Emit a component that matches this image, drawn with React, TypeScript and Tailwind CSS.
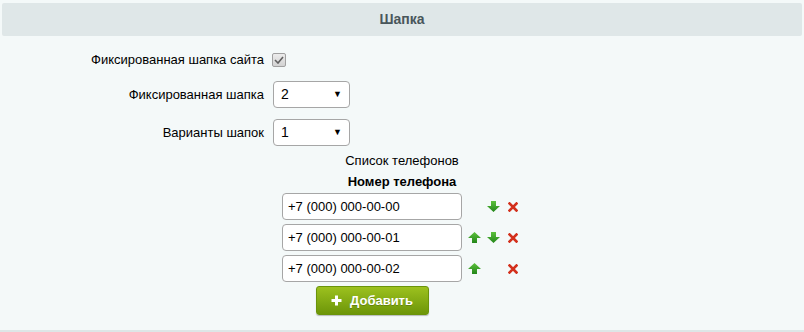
const font = "font-['Arial','Liberation_Sans',sans-serif]";

const ArrowUp = () => (
  <svg width="13" height="11" viewBox="0 0 13 11">
    <defs>
      <linearGradient id="gu" x1="0" y1="0" x2="0" y2="1">
        <stop offset="0" stopColor="#5cc13c" />
        <stop offset="1" stopColor="#23861a" />
      </linearGradient>
    </defs>
    <polygon points="6.5,0 13,6 9,6 9,11 4,11 4,6 0,6" fill="url(#gu)" />
  </svg>
);

const ArrowDown = () => (
  <svg width="13" height="11" viewBox="0 0 13 11">
    <defs>
      <linearGradient id="gd" x1="0" y1="0" x2="0" y2="1">
        <stop offset="0" stopColor="#5cc13c" />
        <stop offset="1" stopColor="#23861a" />
      </linearGradient>
    </defs>
    <polygon points="4,0 9,0 9,5 13,5 6.5,11 0,5 4,5" fill="url(#gd)" />
  </svg>
);

const Cross = () => (
  <svg width="10" height="10" viewBox="0 0 10 10">
    <path d="M1.5 1.5 L8.5 8.5 M8.5 1.5 L1.5 8.5" stroke="#d3301c" strokeWidth="2.6" strokeLinecap="square" />
  </svg>
);

const Select = ({ value }: { value: string }) => (
  <div className="flex h-[27px] w-[77px] items-center justify-between rounded-[4px] border border-[#a6a6a6] bg-white pl-[7px] pr-[7px] text-[14px] text-black">
    <span>{value}</span>
    <span className="text-[9px]">▼</span>
  </div>
);

const phones = [
  { num: '+7 (000) 000-00-00', up: false, down: true },
  { num: '+7 (000) 000-00-01', up: true, down: true },
  { num: '+7 (000) 000-00-02', up: true, down: false },
];

export default function App() {
  return (
    <div className={`${font} h-[332px] w-[804px] border-b-2 border-[#dde6e7] bg-[#f4f9f9] text-[13px] text-black`}>
      <div className="px-[2px] pt-[3px]">
        <div className="flex h-[33px] items-center justify-center rounded-[2px] bg-[#dfe7e8] text-[14px] font-bold text-[#49565b]">
          Шапка
        </div>
      </div>

      <div className="mt-[14px] flex flex-col gap-[11px]">
        <div className="flex h-[20px] items-center">
          <div className="w-[268px] pr-[4px] text-right">Фиксированная шапка сайта</div>
          <div className="ml-[4px] flex h-[14px] w-[14px] items-center justify-center rounded-[2px] border border-[#a0a0a0] bg-gradient-to-b from-[#ececec] to-[#d2d2d2]">
            <svg width="10" height="8" viewBox="0 0 10 8">
              <path d="M1 4 L4 7 L9 1" stroke="#606060" strokeWidth="1.6" fill="none" />
            </svg>
          </div>
        </div>
        <div className="flex items-center">
          <div className="w-[268px] pr-[4px] text-right">Фиксированная шапка</div>
          <div className="ml-[5px]">
            <Select value="2" />
          </div>
        </div>
        <div className="flex items-center">
          <div className="w-[268px] pr-[4px] text-right">Варианты шапок</div>
          <div className="ml-[5px]">
            <Select value="1" />
          </div>
        </div>
      </div>

      <div className="mt-[7px] flex flex-col items-center">
        <div className="leading-[16px]">Список телефонов</div>
        <div className="mt-[5px] font-bold leading-[16px]">Номер телефона</div>
        <div className="mt-[3px] flex flex-col gap-[4px] pr-[4px]">
          {phones.map(p => (
            <div key={p.num} className="flex items-center">
              <div className="flex h-[27px] w-[180px] items-center rounded-[4px] border border-[#a6a6a6] bg-white pl-[5px] text-[13px]">
                {p.num}
              </div>
              <div className="ml-[6px] flex w-[13px] justify-center">{p.up && <ArrowUp />}</div>
              <div className="ml-[6px] flex w-[13px] justify-center">{p.down && <ArrowDown />}</div>
              <div className="ml-[8px] flex w-[10px] justify-center">
                <Cross />
              </div>
            </div>
          ))}
          <div className="flex">
            <div className="flex w-[180px] justify-center">
              <button className="flex h-[29px] w-[113px] items-center justify-center gap-[8px] rounded-[3px] border border-[#6a940a] bg-gradient-to-b from-[#9cc11e] to-[#6d9608] text-[13px] font-bold text-white shadow-[0_1px_1px_rgba(0,0,0,0.25)]">
                <svg width="11" height="11" viewBox="0 0 11 11">
                  <path d="M5.5 0.5 V10.5 M0.5 5.5 H10.5" stroke="white" strokeWidth="3" />
                </svg>
                <span className="[text-shadow:0_1px_0_rgba(0,0,0,0.2)]">Добавить</span>
              </button>
            </div>
            <div className="w-[56px]" />
          </div>
        </div>
      </div>
    </div>
  );
}
